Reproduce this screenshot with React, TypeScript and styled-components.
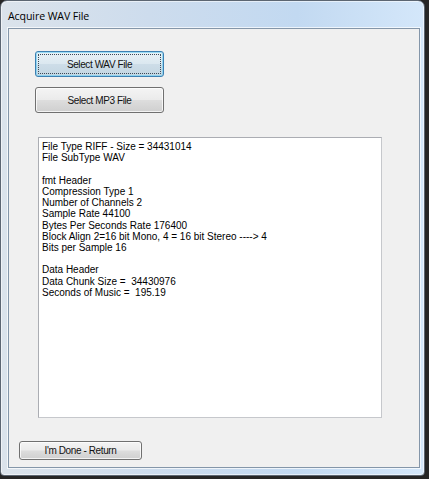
import React from "react";
import styled, { createGlobalStyle, css } from "styled-components";

const Global = createGlobalStyle`
  html, body { margin: 0; padding: 0; }
  body {
    background: #262626;
    width: 429px;
    height: 479px;
    overflow: hidden;
    font-family: "Liberation Sans", Arial, sans-serif;
  }
`;

const Window = styled.div`
  box-sizing: border-box;
  width: 425px;
  height: 476px;
  border: 1px solid #5c6672;
  border-radius: 7px 7px 4px 4px;
  background: linear-gradient(to right, #dbe3eb 0%, #cddced 35%, #c2d9f1 70%, #d4e7fa 100%);
  padding: 0 4px 7px 7px;
  display: flex;
  flex-direction: column;
  box-shadow: inset 0 0 0 1px rgba(255, 255, 255, 0.55);
`;

const TitleBar = styled.div`
  height: 27px;
  display: flex;
  align-items: center;
  padding-top: 2px;
  box-sizing: border-box;
  font-family: "Open Sans", "Noto Sans", sans-serif;
  font-size: 10.6px;
  color: #000;
  letter-spacing: -0.1px;
`;

const Client = styled.div`
  flex: 1;
  background: #f0f0f0;
  border: 1px solid #8496a9;
  box-shadow: 0 0 0 1px rgba(255, 255, 255, 0.7);
  display: flex;
  flex-direction: column;
  align-items: flex-start;
  padding-top: 22px;
`;

const Button = styled.button<{ $default?: boolean; $w: number; $h: number; $left: number; $top?: number }>`
  position: relative;
  box-sizing: border-box;
  width: ${(p) => p.$w}px;
  height: ${(p) => p.$h}px;
  margin: ${(p) => p.$top ?? 0}px 0 0 ${(p) => p.$left}px;
  padding: 0;
  border: 1px solid #707070;
  border-radius: 3px;
  font-family: "Liberation Sans", Arial, sans-serif;
  font-size: 10px;
  letter-spacing: -0.4px;
  color: #111;
  background: linear-gradient(to bottom, #f4f4f4 0%, #ebebeb 48%, #dddddd 52%, #cfcfcf 100%);
  box-shadow: inset 0 0 0 1px rgba(255, 255, 255, 0.75);
  ${(p) =>
    p.$default &&
    css`
      border-color: #3c7fb1;
      background: linear-gradient(to bottom, #e8f1f6 0%, #dbe8f0 48%, #cddde8 52%, #c3d6e2 100%);
      box-shadow: inset 0 0 0 1px rgba(120, 210, 245, 0.7);
      &::after {
        content: "";
        position: absolute;
        inset: 2px;
        border: 1px dotted #3a4a58;
        border-radius: 1px;
      }
    `}
`;

const TextBox = styled.div`
  box-sizing: border-box;
  width: 344px;
  height: 281px;
  margin: 24px 0 0 29px;
  background: #fff;
  border: 1px solid #abadb3;
  border-right-color: #c6c8cc;
  border-bottom-color: #c6c8cc;
  padding: 3px 3px 0 3px;
  font-family: "Liberation Sans", Arial, sans-serif;
  font-size: 10px;
  line-height: 11.23px;
  color: #000;
  white-space: pre;
`;

const Line = styled.div`
  height: 11.23px;
`;

const lines = [
  "File Type RIFF - Size = 34431014",
  "File SubType WAV",
  "",
  "fmt Header",
  "Compression Type 1",
  "Number of Channels 2",
  "Sample Rate 44100",
  "Bytes Per Seconds Rate 176400",
  "Block Align 2=16 bit Mono, 4 = 16 bit Stereo ----> 4",
  "Bits per Sample 16",
  "",
  "Data Header",
  "Data Chunk Size =  34430976",
  "Seconds of Music =  195.19",
];

export default function App() {
  return (
    <>
      <Global />
      <Window>
        <TitleBar>Acquire WAV File</TitleBar>
        <Client>
          <Button $default $w={129} $h={26} $left={26}>
            Select WAV File
          </Button>
          <Button $w={129} $h={26} $left={26} $top={10}>
            Select MP3 File
          </Button>
          <TextBox>
            {lines.map((l, i) => (
              <Line key={i}>{l}</Line>
            ))}
          </TextBox>
          <Button $w={123} $h={19} $left={10} $top={23}>
            I'm Done - Return
          </Button>
        </Client>
      </Window>
    </>
  );
}
